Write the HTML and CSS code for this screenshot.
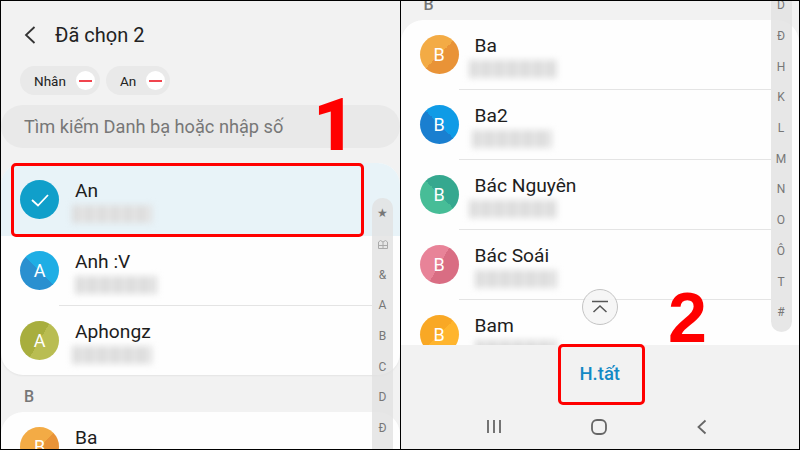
FILE: index.html
```html
<!DOCTYPE html>
<html lang="vi">
<head>
    <meta charset="UTF-8">
    <meta name="viewport" content="width=device-width, initial-scale=1.0">
    <title>Đã chọn 2</title>
    <link rel="stylesheet" href="styles.css">
</head>
<body>

<div class="shot">

    <!-- Màn hình trái -->
    <section class="panel">
        <header class="top-bar">
            <svg class="back" width="14" height="20" viewBox="0 0 14 20"><path d="M11.5 2 L3 10 L11.5 18" /></svg>
            <h1>Đã chọn 2</h1>
        </header>

        <div class="chips">
            <div class="chip">Nhân <span class="chip-x"></span></div>
            <div class="chip">An <span class="chip-x"></span></div>
        </div>

        <div class="search">Tìm kiếm Danh bạ hoặc nhập số</div>

        <div class="card">
            <div class="row row-selected">
                <div class="avatar av-check">
                    <svg width="20" height="16" viewBox="0 0 20 16"><path d="M2 8 L8 13.5 L18 3" /></svg>
                </div>
                <div class="info">
                    <div class="name">An</div>
                    <div class="phone ph-a"></div>
                </div>
            </div>
            <div class="row">
                <div class="avatar av-blue">A</div>
                <div class="info">
                    <div class="name">Anh :V</div>
                    <div class="phone ph-b"></div>
                </div>
            </div>
            <div class="divider"></div>
            <div class="row">
                <div class="avatar av-olive">A</div>
                <div class="info">
                    <div class="name">Aphongz</div>
                    <div class="phone ph-a"></div>
                </div>
            </div>
        </div>

        <div class="group">B</div>

        <div class="card">
            <div class="row">
                <div class="avatar av-orange">B</div>
                <div class="info">
                    <div class="name">Ba</div>
                    <div class="phone ph-a"></div>
                </div>
            </div>
        </div>

        <div class="index index-left">
            <span>★</span>
            <span>
                <svg width="10" height="9" viewBox="0 0 10 9"><path d="M0.5 2 L2.5 0.5 L5 2 L7.5 0.5 L9.5 2 V8.5 H0.5 Z M5 2 V8.5 M0.5 5.5 H9.5" /></svg>
            </span>
            <span>&amp;</span>
            <span>A</span>
            <span>B</span>
            <span>C</span>
            <span>D</span>
            <span>Đ</span>
        </div>
    </section>

    <!-- Màn hình phải -->
    <section class="panel">
        <div class="list-area">
            <div class="group group-cut">B</div>
            <div class="card">
                <div class="row">
                    <div class="avatar av-orange">B</div>
                    <div class="info">
                        <div class="name">Ba</div>
                        <div class="phone ph-c"></div>
                    </div>
                </div>
                <div class="divider"></div>
                <div class="row">
                    <div class="avatar av-sky">B</div>
                    <div class="info">
                        <div class="name">Ba2</div>
                        <div class="phone ph-a"></div>
                    </div>
                </div>
                <div class="divider"></div>
                <div class="row">
                    <div class="avatar av-green">B</div>
                    <div class="info">
                        <div class="name">Bác Nguyên</div>
                        <div class="phone ph-c"></div>
                    </div>
                </div>
                <div class="divider"></div>
                <div class="row">
                    <div class="avatar av-pink">B</div>
                    <div class="info">
                        <div class="name">Bác Soái</div>
                        <div class="phone ph-b"></div>
                    </div>
                </div>
                <div class="divider"></div>
                <div class="row">
                    <div class="avatar av-amber">B</div>
                    <div class="info">
                        <div class="name">Bam</div>
                        <div class="phone ph-b"></div>
                    </div>
                </div>
            </div>

            <div class="scroll-top">
                <svg width="18" height="14" viewBox="0 0 18 14"><path d="M1 1.5 H17 M2.5 12 L9 6 L15.5 12" /></svg>
            </div>

            <div class="index index-right">
                <span>D</span>
                <span>Đ</span>
                <span>H</span>
                <span>K</span>
                <span>L</span>
                <span>M</span>
                <span>N</span>
                <span>O</span>
                <span>Ô</span>
                <span>T</span>
                <span>#</span>
            </div>
        </div>

        <div class="action">H.tất</div>

        <nav class="nav-bar">
            <svg width="16" height="15" viewBox="0 0 16 15"><path d="M2 1 V14 M8 1 V14 M14 1 V14" /></svg>
            <svg width="18" height="18" viewBox="0 0 18 18"><rect x="2" y="2" width="14" height="14" rx="5" /></svg>
            <svg width="12" height="16" viewBox="0 0 12 16"><path d="M9.5 1.5 L2.5 8 L9.5 14.5" /></svg>
        </nav>
    </section>

    <!-- Chú thích đỏ -->
    <div class="mark mark-row"></div>
    <div class="mark mark-done"></div>
    <div class="step step-1">1</div>
    <div class="step step-2">2</div>
</div>

</body>
</html>
```

FILE: styles.css
```css
/* Khung chung */
body {
    margin: 0;
    background: #000;
    font-family: Roboto, "Liberation Sans", sans-serif;
    color: #222;
}
.shot {
    position: relative;
    width: 798px;
    height: 448px;
    padding: 1px;
    display: flex;
    gap: 1px;
    overflow: hidden;
}
.panel {
    position: relative;
    flex: 1;
    min-width: 0;
    background: #f2f2f2;
    display: flex;
    flex-direction: column;
    overflow: hidden;
}

/* Thanh tiêu đề */
.top-bar {
    margin-top: 9px;
    height: 50px;
    flex-shrink: 0;
    padding-left: 22px;
    display: flex;
    align-items: center;
    gap: 18px;
}
.top-bar h1 {
    margin: 0;
    font-size: 20px;
    font-weight: 400;
}
.back path {
    fill: none;
    stroke: #333;
    stroke-width: 1.8;
}

/* Người đã chọn */
.chips {
    margin-top: 6px;
    padding-left: 19px;
    display: flex;
    gap: 6px;
    flex-shrink: 0;
}
.chip {
    height: 29px;
    padding: 0 5px 0 14px;
    border-radius: 15px;
    background: #e9e9e9;
    font-size: 13.5px;
    display: flex;
    align-items: center;
    gap: 10px;
}
.chip-x {
    position: relative;
    width: 19px;
    height: 19px;
    border-radius: 50%;
    background: #fff;
}
.chip-x::after {
    content: "";
    position: absolute;
    left: 3px;
    right: 3px;
    top: 8.5px;
    height: 2px;
    background: #f0444e;
}

/* Ô tìm kiếm */
.search {
    margin-top: 10px;
    height: 43px;
    flex-shrink: 0;
    padding-left: 23px;
    border-radius: 22px;
    background: #e9e9e9;
    color: #777;
    font-size: 18.2px;
    display: flex;
    align-items: center;
}

/* Danh sách */
.card {
    flex-shrink: 0;
    background: #fefefe;
    border-radius: 22px;
    overflow: hidden;
    box-shadow: 0 1px 2px rgba(0, 0, 0, 0.06);
}
.search + .card {
    margin-top: 15px;
}
.row {
    height: 69px;
    padding-left: 19px;
    display: flex;
    align-items: center;
    gap: 16px;
}
.row-selected {
    height: 73px;
    background: #e8f3f8;
}
.divider {
    height: 1px;
    margin: 0 28px 0 58px;
    background: #e4e4e4;
}
.avatar {
    width: 39px;
    height: 39px;
    border-radius: 50%;
    flex-shrink: 0;
    color: #fff;
    font-size: 18px;
    display: flex;
    align-items: center;
    justify-content: center;
}
.av-check { background: #109fca; }
.av-check path {
    fill: none;
    stroke: #fff;
    stroke-width: 1.8;
}
.av-blue { background: linear-gradient(45deg, #2a90d0 50%, #1eaee5 50%); }
.av-olive { background: linear-gradient(120deg, #a8ae3e 50%, #b9bd52 50%); }
.av-orange { background: linear-gradient(135deg, #f3ab45 50%, #e99337 50%); }
.av-sky { background: linear-gradient(45deg, #1a7fd0 50%, #0f9be6 50%); }
.av-green { background: linear-gradient(45deg, #47bd97 50%, #35a88f 50%); }
.av-pink { background: linear-gradient(120deg, #e88398 50%, #d96d83 50%); }
.av-amber { background: linear-gradient(135deg, #f9a825 50%, #ffb52e 50%); }

.info {
    min-width: 0;
    margin-top: 3px;
}
.name {
    font-size: 19.2px;
    line-height: 22px;
    color: #1d1d1d;
}
.phone {
    height: 18px;
    margin-top: 3px;
    background: repeating-linear-gradient(90deg, #dcdcdc 0, #dcdcdc 8px, #e6e6e6 8px, #e6e6e6 13px);
    filter: blur(3px);
}
.ph-a {
    width: 80px;
    margin-left: -3px;
}
.ph-b {
    width: 82px;
    margin-left: 0;
}
.ph-c {
    width: 88px;
    margin-left: -6px;
}
.group {
    height: 31px;
    flex-shrink: 0;
    padding: 6px 0 0 23px;
    color: #777;
    font-size: 16px;
    font-weight: 500;
    display: flex;
    align-items: center;
}
.group-cut {
    height: 19px;
    padding-top: 0;
    line-height: 8px;
    align-items: flex-start;
}

/* Thanh chữ cái */
.index {
    position: absolute;
    width: 21px;
    background: rgba(225, 225, 225, 0.8);
    display: flex;
    flex-direction: column;
    color: #777;
    font-size: 12px;
}
.index span {
    height: 30.7px;
    flex-shrink: 0;
    display: flex;
    align-items: center;
    justify-content: center;
}
.index path {
    fill: none;
    stroke: #aaa;
    stroke-width: 1;
}
.index-left {
    left: 371px;
    top: 197px;
    height: 260px;
    border-radius: 10px 10px 0 0;
}
.index-right {
    left: 370px;
    top: -11px;
    height: 342px;
    border-radius: 0 0 11px 11px;
}

/* Màn hình phải */
.list-area {
    position: relative;
    height: 344px;
    flex-shrink: 0;
    overflow: hidden;
}
.scroll-top {
    position: absolute;
    left: 181px;
    top: 288px;
    width: 34px;
    height: 34px;
    border: 1px solid #c4c4c4;
    border-radius: 50%;
    background: rgba(245, 245, 245, 0.9);
    display: flex;
    align-items: center;
    justify-content: center;
}
.scroll-top path {
    fill: none;
    stroke: #555;
    stroke-width: 1.5;
}
.action {
    height: 57px;
    padding-bottom: 2px;
    flex-shrink: 0;
    color: #1389c5;
    font-size: 18.5px;
    font-weight: 500;
    display: flex;
    align-items: center;
    justify-content: center;
}
.nav-bar {
    flex: 1;
    padding: 0 91px 0 85px;
    display: flex;
    align-items: center;
    justify-content: space-between;
}
.nav-bar path,
.nav-bar rect {
    fill: none;
    stroke: #666;
    stroke-width: 1.8;
}

/* Chú thích đỏ */
.mark {
    position: absolute;
    border: 3px solid #f00;
    border-radius: 5px;
}
.mark-row {
    left: 11px;
    top: 163px;
    width: 347px;
    height: 68px;
}
.mark-done {
    left: 558px;
    top: 344px;
    width: 81px;
    height: 55px;
}
.step {
    position: absolute;
    color: #f00;
    font-family: "Liberation Sans", sans-serif;
    font-weight: 700;
    line-height: 1;
}
.step-1 {
    left: 313px;
    top: 89px;
    font-family: Roboto, "Liberation Sans", sans-serif;
    font-size: 73px;
    font-weight: 900;
}
.step-2 {
    left: 668px;
    top: 283px;
    font-size: 70px;
}
```
